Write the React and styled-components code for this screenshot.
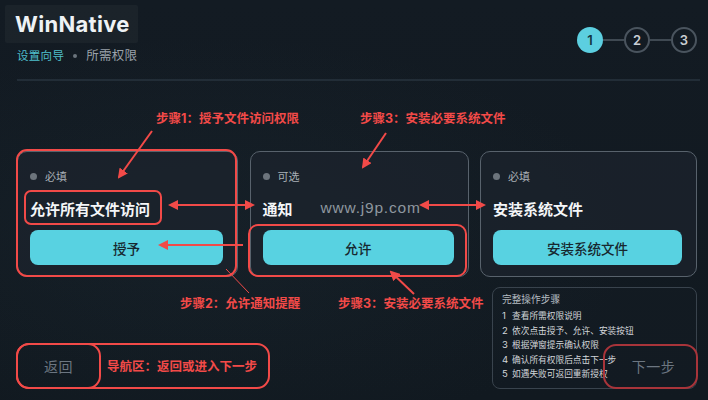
import React from 'react';
import styled, { createGlobalStyle, css } from 'styled-components';

const Global = createGlobalStyle`
  html, body {
    margin: 0;
    padding: 0;
    background: #121a22;
  }
  * { box-sizing: border-box; }
`;

const FONT = `Inter, "Noto Sans CJK SC", "Noto Sans", sans-serif`;
const RED = '#f24a48';
const TEAL = '#58d2e1';

const Page = styled.div`
  position: relative;
  width: 708px;
  height: 400px;
  overflow: hidden;
  padding: 5px 11px 0 17px;
  display: flex;
  flex-direction: column;
  font-family: ${FONT};
  background:
    radial-gradient(ellipse at 30% 60%, rgba(40, 60, 70, 0.18), transparent 60%),
    linear-gradient(180deg, #131b23 0%, #111920 100%);
`;

const Header = styled.header`
  height: 74px;
  display: flex;
  justify-content: space-between;
  align-items: flex-start;
`;

const Brand = styled.div`
  display: flex;
  flex-direction: column;
`;

const Logo = styled.div`
  margin-left: -12px;
  width: 133px;
  height: 38px;
  padding: 0 10px;
  display: flex;
  align-items: center;
  background: rgba(255, 255, 255, 0.035);
  border-radius: 2px;
  color: #eef2f5;
  font-size: 22px;
  font-weight: 700;
  letter-spacing: 0.3px;
`;

const Crumbs = styled.div`
  margin-top: 5px;
  display: flex;
  align-items: center;
  gap: 8px;
  letter-spacing: 0.3px;
  line-height: 16px;
`;

const Crumb = styled.span`
  color: ${({ active }) => (active ? '#4fbfcc' : '#9aa2aa')};
  font-size: ${({ active }) => (active ? '11.5px' : '12.5px')};
`;

const Dot = styled.span`
  width: 4px;
  height: 4px;
  border-radius: 50%;
  background: #6b747c;
  margin: 0 1px;
`;

const Stepper = styled.div`
  margin-top: 22px;
  display: flex;
  align-items: center;
`;

const StepCircle = styled.div`
  width: 26px;
  height: 26px;
  border-radius: 50%;
  display: flex;
  align-items: center;
  justify-content: center;
  font-size: 13px;
  font-weight: 600;
  ${({ active }) =>
    active
      ? css`
          background: #5ccfe0;
          color: #133540;
        `
      : css`
          border: 2px solid #4a545e;
          color: #c9ced3;
        `}
`;

const StepLine = styled.div`
  width: 21px;
  height: 2px;
  background: #3f4952;
`;

const Divider = styled.div`
  height: 2px;
  margin-right: -3px;
  background: #222d37;
`;

const Cards = styled.div`
  margin-top: 70px;
  display: grid;
  grid-template-columns: 221px 219px 217px;
  justify-content: space-between;
`;

const Card = styled.div`
  height: 126px;
  border: 1.5px solid #58626c;
  border-radius: 10px;
  background: rgba(28, 36, 45, 0.7);
  padding: 17px 14px 11px 12px;
  display: flex;
  flex-direction: column;
`;

const Badge = styled.div`
  height: 14px;
  display: flex;
  align-items: center;
  gap: 8px;
  color: #a9b0b6;
  font-size: 11px;
  &::before {
    content: '';
    width: 7px;
    height: 7px;
    border-radius: 50%;
    background: #6c747c;
  }
`;

const TitleRow = styled.div`
  margin-top: 14px;
  height: 22px;
  display: flex;
  align-items: center;
  gap: 28px;
`;

const Title = styled.div`
  color: #f4f6f8;
  font-size: 15px;
  font-weight: 700;
`;

const Watermark = styled.span`
  color: #8e979f;
  font-family: "Liberation Sans", Arial, sans-serif;
  font-size: 15.5px;
  letter-spacing: 0.8px;
`;

const ActionButton = styled.button`
  margin-top: 11px;
  height: 35px;
  border: 0;
  border-radius: 8px;
  background: ${TEAL};
  color: #17282f;
  font-family: ${FONT};
  font-size: 13.5px;
  font-weight: 500;
  cursor: pointer;
`;

const NavRow = styled.nav`
  margin-top: auto;
  margin-bottom: 12px;
  height: 44px;
  display: flex;
  justify-content: space-between;
`;

const NavButton = styled.button`
  position: relative;
  z-index: 1;
  width: ${({ wide }) => (wide ? 93 : 83)}px;
  height: 44px;
  border: 0;
  border-radius: 12px;
  background: transparent;
  color: #6c7681;
  font-family: ${FONT};
  font-size: ${({ wide }) => (wide ? 14 : 14)}px;
  letter-spacing: 0.5px;
  padding: ${({ wide }) => (wide ? '0 0 0 6px' : '0')};
`;

const Guide = styled.aside`
  position: absolute;
  left: 492px;
  top: 287px;
  width: 205px;
  height: 102px;
  padding: 5px 9px;
  border: 1px solid #39434d;
  border-radius: 8px;
  background: rgba(22, 30, 38, 0.25);
  color: #d2d6da;
  font-size: 8.7px;
`;

const GuideTitle = styled.div`
  color: #b4bbc1;
  font-size: 9.7px;
  line-height: 14px;
  margin-bottom: 2px;
`;

const GuideItem = styled.div`
  line-height: 14.5px;
  display: flex;
  gap: 5px;
  span:first-child { width: 5px; font-size: 9.5px; }
`;

const Overlay = styled.div`
  position: absolute;
  inset: 0;
  z-index: 2;
  pointer-events: none;
`;

const Note = styled.span`
  position: absolute;
  left: ${({ x }) => x}px;
  top: ${({ y }) => y}px;
  line-height: 18px;
  color: ${RED};
  font-size: 12.5px;
  font-weight: 700;
  white-space: nowrap;
`;

const cards = [
  { badge: '必填', title: '允许所有文件访问', action: '授予' },
  { badge: '可选', title: '通知', action: '允许', mark: 'www.j9p.com' },
  { badge: '必填', title: '安装系统文件', action: '安装系统文件' },
];

const guide = [
  '查看所需权限说明',
  '依次点击授予、允许、安装按钮',
  '根据弹窗提示确认权限',
  '确认所有权限后点击下一步',
  '如遇失败可返回重新授权',
];

const notes = [
  { x: 156, y: 110, text: '步骤1：授予文件访问权限' },
  { x: 360, y: 110, text: '步骤3：安装必要系统文件' },
  { x: 180, y: 295, text: '步骤2：允许通知提醒' },
  { x: 338, y: 295, text: '步骤3：安装必要系统文件' },
  { x: 107, y: 358, text: '导航区：返回或进入下一步' },
];

const Callouts = () => (
  <svg width="708" height="400" viewBox="0 0 708 400" style={{ position: 'absolute', inset: 0 }}>
    <defs>
      <marker id="head" viewBox="0 0 10 10" refX="8" refY="5" markerWidth="5" markerHeight="5" orient="auto-start-reverse">
        <path d="M0 0 L10 5 L0 10 z" fill={RED} />
      </marker>
    </defs>
    <g fill="none" stroke={RED} strokeWidth="2">
      <rect x="17" y="150" width="219" height="126" rx="10" />
      <rect x="25" y="191" width="136" height="33" rx="6" />
      <rect x="249" y="225" width="217" height="51" rx="9" />
      <rect x="17" y="344" width="83" height="44" rx="12" />
      <rect x="17" y="344" width="252" height="44" rx="12" />
      <rect x="604" y="345" width="93" height="43" rx="12" stroke="#a8343a" />
      <line x1="152" y1="131" x2="119" y2="177" markerEnd="url(#head)" />
      <line x1="386" y1="133" x2="363" y2="167" markerEnd="url(#head)" />
      <line x1="170" y1="205" x2="253" y2="205" markerStart="url(#head)" markerEnd="url(#head)" />
      <line x1="421" y1="205" x2="484" y2="205" markerStart="url(#head)" markerEnd="url(#head)" />
      <line x1="243" y1="245" x2="160" y2="245" markerEnd="url(#head)" />
      <line x1="414" y1="294" x2="391" y2="272" markerEnd="url(#head)" />
      <line x1="226" y1="269" x2="249" y2="293" strokeWidth="1" />
    </g>
  </svg>
);

export default function App() {
  return (
    <>
      <Global />
      <Page>
        <Header>
          <Brand>
            <Logo>WinNative</Logo>
            <Crumbs>
              <Crumb active>设置向导</Crumb>
              <Dot />
              <Crumb>所需权限</Crumb>
            </Crumbs>
          </Brand>
          <Stepper>
            <StepCircle active>1</StepCircle>
            <StepLine />
            <StepCircle>2</StepCircle>
            <StepLine />
            <StepCircle>3</StepCircle>
          </Stepper>
        </Header>
        <Divider />

        <Cards>
          {cards.map((c) => (
            <Card key={c.action}>
              <Badge>{c.badge}</Badge>
              <TitleRow>
                <Title>{c.title}</Title>
                {c.mark && <Watermark>{c.mark}</Watermark>}
              </TitleRow>
              <ActionButton>{c.action}</ActionButton>
            </Card>
          ))}
        </Cards>

        <Guide>
          <GuideTitle>完整操作步骤</GuideTitle>
          {guide.map((g, i) => (
            <GuideItem key={g}>
              <span>{i + 1}</span>
              <span>{g}</span>
            </GuideItem>
          ))}
        </Guide>

        <NavRow>
          <NavButton>返回</NavButton>
          <NavButton wide>下一步</NavButton>
        </NavRow>

        <Overlay>
          <Callouts />
          {notes.map((n) => (
            <Note key={n.text + n.x} x={n.x} y={n.y}>
              {n.text}
            </Note>
          ))}
        </Overlay>
      </Page>
    </>
  );
}
